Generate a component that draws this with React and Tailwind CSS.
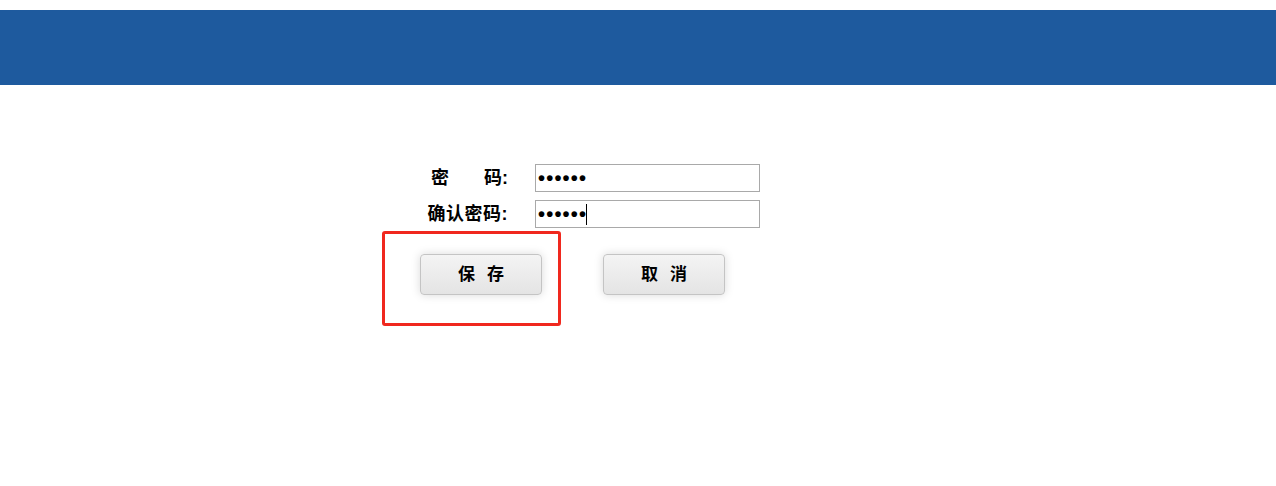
import React from 'react';

const font = { fontFamily: '"Liberation Sans", "Noto Sans CJK SC", sans-serif' };

function Dots({ caret }) {
  return (
    <div className="w-[225px] h-[28px] border border-[#a9a9a9] bg-white flex items-center pl-[2px]">
      <span className="text-[20px] leading-none font-bold tracking-[1.2px] text-black">••••••</span>
      {caret && <span className="w-px h-[21px] bg-black ml-[-1px]" />}
    </div>
  );
}

function Btn({ children }) {
  return (
    <button className="w-[122px] h-[41px] rounded-[4px] border border-[#c4c4c4] bg-gradient-to-b from-[#f4f4f4] to-[#e4e4e4] shadow-[0_0_10px_rgba(0,0,0,0.15)] text-[17px] font-bold text-black tracking-[12px] pl-[12px]">
      {children}
    </button>
  );
}

export default function App() {
  return (
    <div className="w-[1276px] h-[486px] bg-white relative" style={font}>
      <div className="h-[10px]" />
      <div className="h-[75px] bg-[#1e5a9e]" />
      <div className="pt-[79px] pl-[420px]">
        <div className="flex items-center h-[28px]">
          <div className="w-[88px] text-[18px] font-bold flex justify-end">
            <span>密</span>
            <span className="ml-[35px]">码:</span>
          </div>
          <div className="ml-[27px]"><Dots /></div>
        </div>
        <div className="flex items-center h-[28px] mt-[8px]">
          <div className="w-[88px] text-right text-[18px] font-bold tracking-[0.5px]">确认密码:</div>
          <div className="ml-[27px]"><Dots caret /></div>
        </div>
        <div className="flex mt-[26px] gap-[61px]">
          <Btn>保存</Btn>
          <Btn>取消</Btn>
        </div>
      </div>
      <div className="absolute left-[382px] top-[231px] w-[179px] h-[95px] border-[3px] border-[#f0281e] rounded-[3px]" />
    </div>
  );
}
